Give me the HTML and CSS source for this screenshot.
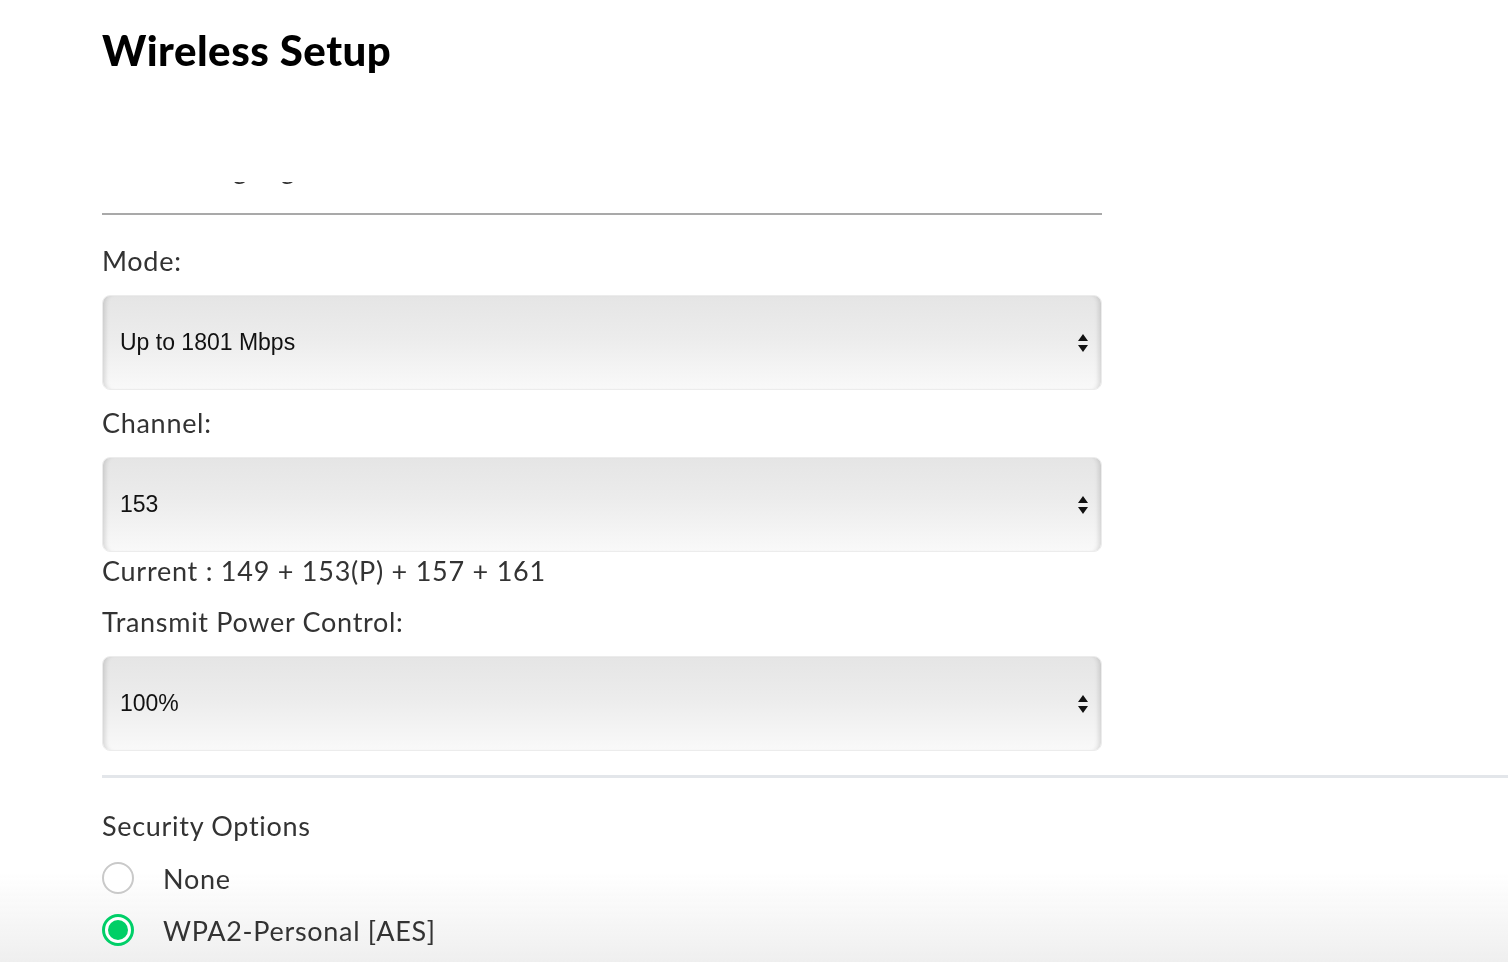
FILE: index.html
```html
<!DOCTYPE html>
<html lang="en">
<head>
<meta charset="utf-8">
<title>Wireless Setup</title>
<link rel="stylesheet" href="styles.css">
</head>
<body>
<main class="page">
  <h1 class="title">Wireless Setup</h1>
  <div class="clip">
    <div class="clip-text">Basic Setting Page</div>
  </div>
  <hr class="rule-top">

  <div class="field">
    <div class="label label-first">Mode:</div>
    <div class="select">
      <span class="select-value">Up to 1801 Mbps</span>
      <svg class="arrows" width="10" height="18" viewBox="0 0 10 18"><path d="M5 0 L10 7 L0 7 Z M0 11 L10 11 L5 18 Z" fill="#111"/></svg>
    </div>
  </div>

  <div class="field">
    <div class="label">Channel:</div>
    <div class="select">
      <span class="select-value">153</span>
      <svg class="arrows" width="10" height="18" viewBox="0 0 10 18"><path d="M5 0 L10 7 L0 7 Z M0 11 L10 11 L5 18 Z" fill="#111"/></svg>
    </div>
    <div class="note">Current : 149 + 153(P) + 157 + 161</div>
  </div>

  <div class="field">
    <div class="label">Transmit Power Control:</div>
    <div class="select">
      <span class="select-value">100%</span>
      <svg class="arrows" width="10" height="18" viewBox="0 0 10 18"><path d="M5 0 L10 7 L0 7 Z M0 11 L10 11 L5 18 Z" fill="#111"/></svg>
    </div>
  </div>
</main>
<hr class="rule-section">
<section class="security">
  <div class="label section-label">Security Options</div>
  <label class="radio-row">
    <span class="radio"></span>
    <span class="radio-text">None</span>
  </label>
  <label class="radio-row">
    <span class="radio checked"><span class="dot"></span></span>
    <span class="radio-text">WPA2-Personal [AES]</span>
  </label>
</section>
<div class="bottom-fade"></div>
</body>
</html>
```

FILE: styles.css
```css
html {
  margin: 0;
  padding: 0;
  background: #ffffff;
  height: 962px;
  overflow: hidden;
}

body {
  margin: 0;
  padding: 0;
  font-family: Lato, "Open Sans", sans-serif;
  color: #333333;
}

.page {
  width: 1000px;
  padding: 0 0 0 102px;
}

.title {
  margin: 0;
  padding-top: 24px;
  font-family: Lato, sans-serif;
  font-weight: 900;
  font-size: 42px;
  line-height: 52px;
  color: #000;
  letter-spacing: 0.5px;
}

.clip {
  margin-top: 106px;
  height: 6px;
  overflow: hidden;
}

.clip-text {
  margin-top: -28px;
  font-size: 27px;
  letter-spacing: -0.6px;
  line-height: 30px;
  color: #333;
}

.rule-top {
  margin: 25px 0 0 0;
  border: 0;
  height: 2px;
  background: #a9a9a9;
}

.field {
  display: flex;
  flex-direction: column;
}

.label {
  font-size: 27px;
  letter-spacing: 0.7px;
  line-height: 36px;
  margin-top: 15px;
  margin-bottom: 16px;
  color: #333;
}

.label-first {
  margin-top: 28px;
}

.select {
  box-sizing: border-box;
  height: 95px;
  display: flex;
  align-items: center;
  justify-content: space-between;
  padding: 0 13px 0 17px;
  border: 1px solid #ececec;
  border-radius: 8px;
  background: linear-gradient(#e5e5e5 0%, #ececec 45%, #f9f9f9 100%);
  box-shadow: inset 6px 0 5px -4px rgba(0, 0, 0, 0.14),
              inset -6px 0 5px -4px rgba(0, 0, 0, 0.14);
}

.select-value {
  font-family: "Liberation Sans", Arial, sans-serif;
  font-size: 23px;
  color: #111;
}

.arrows {
  display: block;
}

.note {
  font-size: 27px;
  letter-spacing: 0.75px;
  line-height: 36px;
  margin-top: 1px;
  color: #333;
}

.rule-section {
  margin: 24px 0 0 102px;
  border: 0;
  height: 3px;
  background: #e3e6ea;
}

.security {
  padding-left: 102px;
}

.section-label {
  margin-top: 30px;
  margin-bottom: 0;
}

.radio-row {
  display: flex;
  align-items: center;
  margin-top: 16px;
  height: 36px;
}

.radio {
  box-sizing: border-box;
  width: 32px;
  height: 32px;
  border-radius: 50%;
  border: 2px solid #c9c9c9;
  background: #fff;
  display: flex;
  align-items: center;
  justify-content: center;
}

.radio.checked {
  border: 3px solid #00cf68;
}

.dot {
  width: 20px;
  height: 20px;
  border-radius: 50%;
  background: #00cf66;
}

.radio-text {
  margin-left: 29px;
  font-size: 27px;
  letter-spacing: 0.7px;
  color: #333;
}

.bottom-fade {
  position: fixed;
  z-index: -1;
  left: 0;
  right: 0;
  bottom: 0;
  height: 90px;
  background: linear-gradient(rgba(239, 239, 239, 0), #efefef);
  pointer-events: none;
}
```
